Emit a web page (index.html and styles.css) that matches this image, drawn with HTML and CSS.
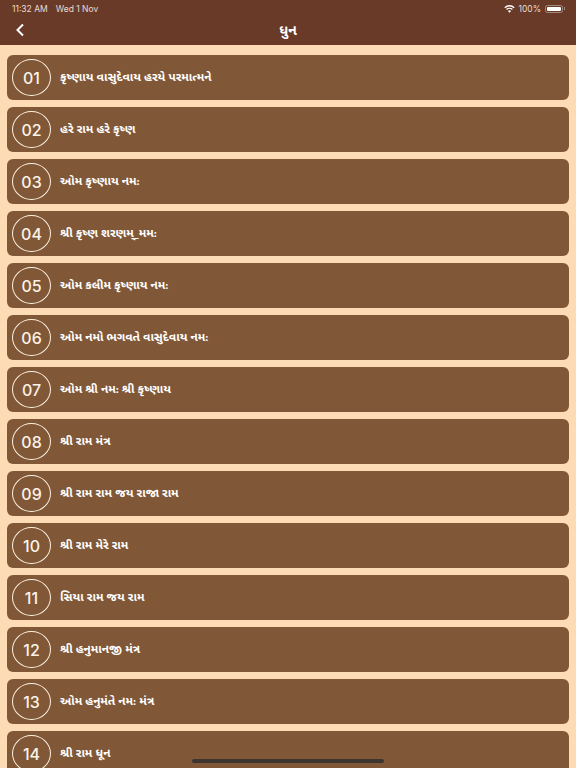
FILE: index.html
```html
<!DOCTYPE html>
<html lang="gu">
<head>
<meta charset="utf-8">
<title>ધુન</title>
<link rel="stylesheet" href="styles.css">
</head>
<body>
<div class="page">
<header class="header">
  <div class="status">
    <div class="status-left"><span>11:32 AM</span><span>Wed 1 Nov</span></div>
    <div class="status-right">
      <svg class="wifi" viewBox="0 0 12 9"><path d="M6 8.600 4.200 6.700a2.600 2.600 0 0 1 3.600 0zM3.200 5.700 2.200 4.600a5.400 5.400 0 0 1 7.600 0L8.800 5.700a4 4 0 0 0-5.600 0zM1.200 3.600.2 2.500a8.200 8.200 0 0 1 11.600 0l-1 1.100a6.800 6.800 0 0 0-9.600 0z"/></svg>
      <span>100%</span>
      <span class="battery"><span class="battery-fill"></span></span>
      <span class="battery-cap"></span>
    </div>
  </div>
  <div class="nav">
    <svg class="back" viewBox="0 0 10 14"><path d="M8 1.500 2.500 7 8 12.500"/></svg>
    <h1 class="title">ધુન</h1>
  </div>
</header>
<main class="list">
  <div class="row"><span class="num">01</span><span class="label">કૃષ્ણાય વાસુદેવાય હરયે પરમાત્મને</span></div>
  <div class="row"><span class="num">02</span><span class="label">હરે રામ હરે કૃષ્ણ</span></div>
  <div class="row"><span class="num">03</span><span class="label">ઓમ કૃષ્ણાય નમઃ</span></div>
  <div class="row"><span class="num">04</span><span class="label">શ્રી કૃષ્ણ શરણમ્_મમઃ</span></div>
  <div class="row"><span class="num">05</span><span class="label">ઓમ કલીમ કૃષ્ણાય નમઃ</span></div>
  <div class="row"><span class="num">06</span><span class="label">ઓમ નમો ભગવતે વાસુદેવાય નમઃ</span></div>
  <div class="row"><span class="num">07</span><span class="label">ઓમ શ્રી નમઃ શ્રી કૃષ્ણાય</span></div>
  <div class="row"><span class="num">08</span><span class="label">શ્રી રામ મંત્ર</span></div>
  <div class="row"><span class="num">09</span><span class="label">શ્રી રામ રામ જય રાજા રામ</span></div>
  <div class="row"><span class="num">10</span><span class="label">શ્રી રામ મેરે રામ</span></div>
  <div class="row"><span class="num">11</span><span class="label">સિયા રામ જય રામ</span></div>
  <div class="row"><span class="num">12</span><span class="label">શ્રી હનુમાનજી મંત્ર</span></div>
  <div class="row"><span class="num">13</span><span class="label">ઓમ હનુમંતે નમઃ મંત્ર</span></div>
  <div class="row"><span class="num">14</span><span class="label">શ્રી રામ ધૂન</span></div>
</main>
<div class="home-bar"></div>
</div>
</body>
</html>
```
FILE: styles.css
```css
* { box-sizing: border-box; }
html, body { margin: 0; height: 100%; }
body { font-family: "Noto Sans Gujarati", "Lohit Gujarati", "Noto Sans", "DejaVu Sans", sans-serif; background: #fddcb5; color: #fff; }
.page { position: relative; width: 576px; height: 768px; overflow: hidden; background: #fddcb5; }
.header { height: 45px; background: #683a27; display: flex; flex-direction: column; }
.status { height: 17px; padding: 0 11px 0 12px; display: flex; justify-content: space-between; align-items: center; font: 8.500px "Inter", sans-serif; color: #e8dcd4; }
.status-left { display: flex; gap: 8px; }
.status-right { display: flex; align-items: center; gap: 3px; }
.wifi { width: 11px; height: 8px; fill: #fff; }
.battery { width: 18px; height: 8px; margin-left: 1px; border: 1px solid #a08a7e; border-radius: 2.500px; padding: 1px; display: flex; }
.battery-fill { flex: 1; background: #fff; border-radius: 1px; }
.battery-cap { width: 1px; height: 3px; margin-left: -2px; background: #a08a7e; }
.nav { flex: 1; position: relative; display: flex; align-items: center; justify-content: center; padding-top: 2px; }
.back { position: absolute; left: 15px; top: 6px; width: 10px; height: 14px; fill: none; stroke: #fff; stroke-width: 2; }
.title { margin: 0; font-size: 14px; font-weight: 700; line-height: 20px; }
.list { display: flex; flex-direction: column; gap: 7px; padding: 10px 7px 0; }
.row { flex: none; height: 45px; border-radius: 6px; background: #815837; display: flex; align-items: center; padding-left: 5px; gap: 9px; }
.num { width: 39px; height: 37px; flex: none; border: 1.700px solid #fdf0e0; border-radius: 50%; display: flex; align-items: center; justify-content: center; font: 500 16px "Inter", sans-serif; color: #fbf2e8; }
.label { font-size: 11.900px; font-weight: 700; line-height: 16px; }
.home-bar { position: absolute; left: 192px; bottom: 5px; width: 192px; height: 4px; border-radius: 2px; background: #3d3530; }
```
